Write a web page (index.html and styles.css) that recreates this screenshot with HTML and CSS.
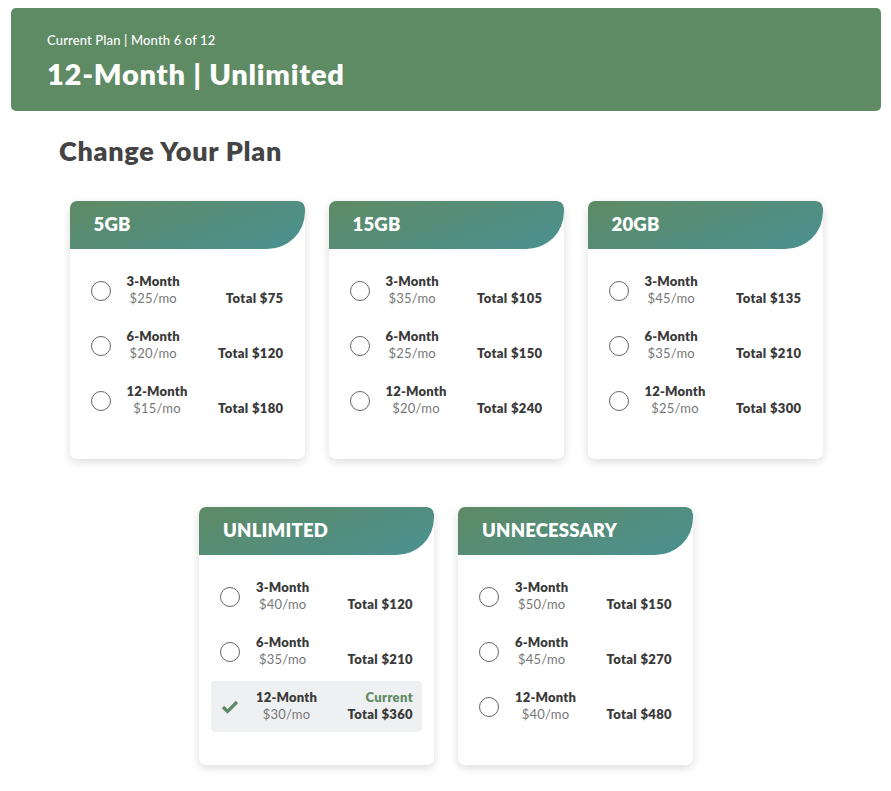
FILE: index.html
```html
<!DOCTYPE html>
<html>
<head>
<meta charset="utf-8">
<link rel="stylesheet" href="styles.css">
</head>
<body>
<header class="banner">
  <div class="banner-sub">Current Plan | Month 6 of 12</div>
  <div class="banner-title">12-Month | Unlimited</div>
</header>
<h1 class="page-title">Change Your Plan</h1>
<div class="cards">
  <div class="card">
    <div class="card-head">5GB</div>
    <div class="rows">
      <div class="row"><span class="radio"></span><div class="term"><b>3-Month</b><span>$25/mo</span></div><div class="total">Total $75</div></div>
      <div class="row"><span class="radio"></span><div class="term"><b>6-Month</b><span>$20/mo</span></div><div class="total">Total $120</div></div>
      <div class="row"><span class="radio"></span><div class="term"><b>12-Month</b><span>$15/mo</span></div><div class="total">Total $180</div></div>
    </div>
  </div>
  <div class="card">
    <div class="card-head">15GB</div>
    <div class="rows">
      <div class="row"><span class="radio"></span><div class="term"><b>3-Month</b><span>$35/mo</span></div><div class="total">Total $105</div></div>
      <div class="row"><span class="radio"></span><div class="term"><b>6-Month</b><span>$25/mo</span></div><div class="total">Total $150</div></div>
      <div class="row"><span class="radio"></span><div class="term"><b>12-Month</b><span>$20/mo</span></div><div class="total">Total $240</div></div>
    </div>
  </div>
  <div class="card">
    <div class="card-head">20GB</div>
    <div class="rows">
      <div class="row"><span class="radio"></span><div class="term"><b>3-Month</b><span>$45/mo</span></div><div class="total">Total $135</div></div>
      <div class="row"><span class="radio"></span><div class="term"><b>6-Month</b><span>$35/mo</span></div><div class="total">Total $210</div></div>
      <div class="row"><span class="radio"></span><div class="term"><b>12-Month</b><span>$25/mo</span></div><div class="total">Total $300</div></div>
    </div>
  </div>
  <div class="card">
    <div class="card-head">UNLIMITED</div>
    <div class="rows">
      <div class="row"><span class="radio"></span><div class="term"><b>3-Month</b><span>$40/mo</span></div><div class="total">Total $120</div></div>
      <div class="row"><span class="radio"></span><div class="term"><b>6-Month</b><span>$35/mo</span></div><div class="total">Total $210</div></div>
      <div class="row current"><svg class="check" width="20" height="20" viewBox="0 0 20 20"><path d="M3 10 L7.5 14.5 L17 5" fill="none" stroke="#5e8a64" stroke-width="3.2"/></svg><div class="term"><b>12-Month</b><span>$30/mo</span></div><div class="total"><em>Current</em>Total $360</div></div>
    </div>
  </div>
  <div class="card">
    <div class="card-head">UNNECESSARY</div>
    <div class="rows">
      <div class="row"><span class="radio"></span><div class="term"><b>3-Month</b><span>$50/mo</span></div><div class="total">Total $150</div></div>
      <div class="row"><span class="radio"></span><div class="term"><b>6-Month</b><span>$45/mo</span></div><div class="total">Total $270</div></div>
      <div class="row"><span class="radio"></span><div class="term"><b>12-Month</b><span>$40/mo</span></div><div class="total">Total $480</div></div>
    </div>
  </div>
</div>
</body>
</html>
```
FILE: styles.css
```css
* { box-sizing: border-box; }
body {
  margin: 0;
  padding: 8px 10px 30px 11px;
  font-family: Lato, "Liberation Sans", sans-serif;
  background: #fff;
  color: #3a3a3a;
}
.banner {
  height: 103px;
  background: #5e8a64;
  border-radius: 5px;
  padding: 24px 36px 0;
  color: #fff;
}
.banner-sub {
  font-size: 13px;
  line-height: 16px;
  font-weight: 500;
  letter-spacing: 0.15px;
}
.banner-title {
  margin-top: 9px;
  font-size: 29px;
  line-height: 34px;
  font-weight: 800;
  letter-spacing: 0.75px;
}
.page-title {
  margin: 24px 0 0 48px;
  font-size: 27px;
  line-height: 32px;
  font-weight: 800;
  color: #444;
  letter-spacing: 0.7px;
}
.cards {
  margin: 34px auto 0;
  width: 760px;
  display: flex;
  flex-wrap: wrap;
  justify-content: center;
  column-gap: 24px;
  row-gap: 48px;
}
.card {
  width: 235px;
  height: 258px;
  background: #fff;
  border-radius: 7px;
  box-shadow: 0 3px 10px rgba(0,0,0,0.14);
  overflow: hidden;
}
.card-head {
  height: 48px;
  background: linear-gradient(160deg, #5e8a64 0%, #4a9192 100%);
  border-radius: 0 7px 38px 0 / 0 7px 37px 0;
  color: #fff;
  font-size: 18.5px;
  font-weight: 800;
  line-height: 47px;
  padding-left: 24px;
  letter-spacing: 0.2px;
}
.rows {
  padding: 16px 12px 0;
  display: flex;
  flex-direction: column;
  gap: 4px;
}
.row {
  height: 51px;
  display: flex;
  align-items: center;
  padding: 0 9px;
  border-radius: 4px;
}
.row.current { background: #eef0f1; }
.radio {
  width: 20px;
  height: 20px;
  border: 1px solid #666;
  border-radius: 50%;
  flex: none;
}
.check { flex: none; }
.term {
  margin-left: 16px;
  margin-top: -1px;
  display: flex;
  flex-direction: column;
  align-items: center;
  font-size: 13px;
  line-height: 17px;
  letter-spacing: 0.2px;
}
.term b { font-weight: 800; color: #3a3a3a; }
.term span { color: #777; }
.total {
  margin-left: auto;
  align-self: flex-end;
  margin-bottom: 9px;
  font-size: 13px;
  line-height: 17px;
  font-weight: 800;
  text-align: right;
  letter-spacing: 0.35px;
  display: flex;
  flex-direction: column;
  align-items: flex-end;
}
.total em {
  font-style: normal;
  color: #5e8a64;
}
```
